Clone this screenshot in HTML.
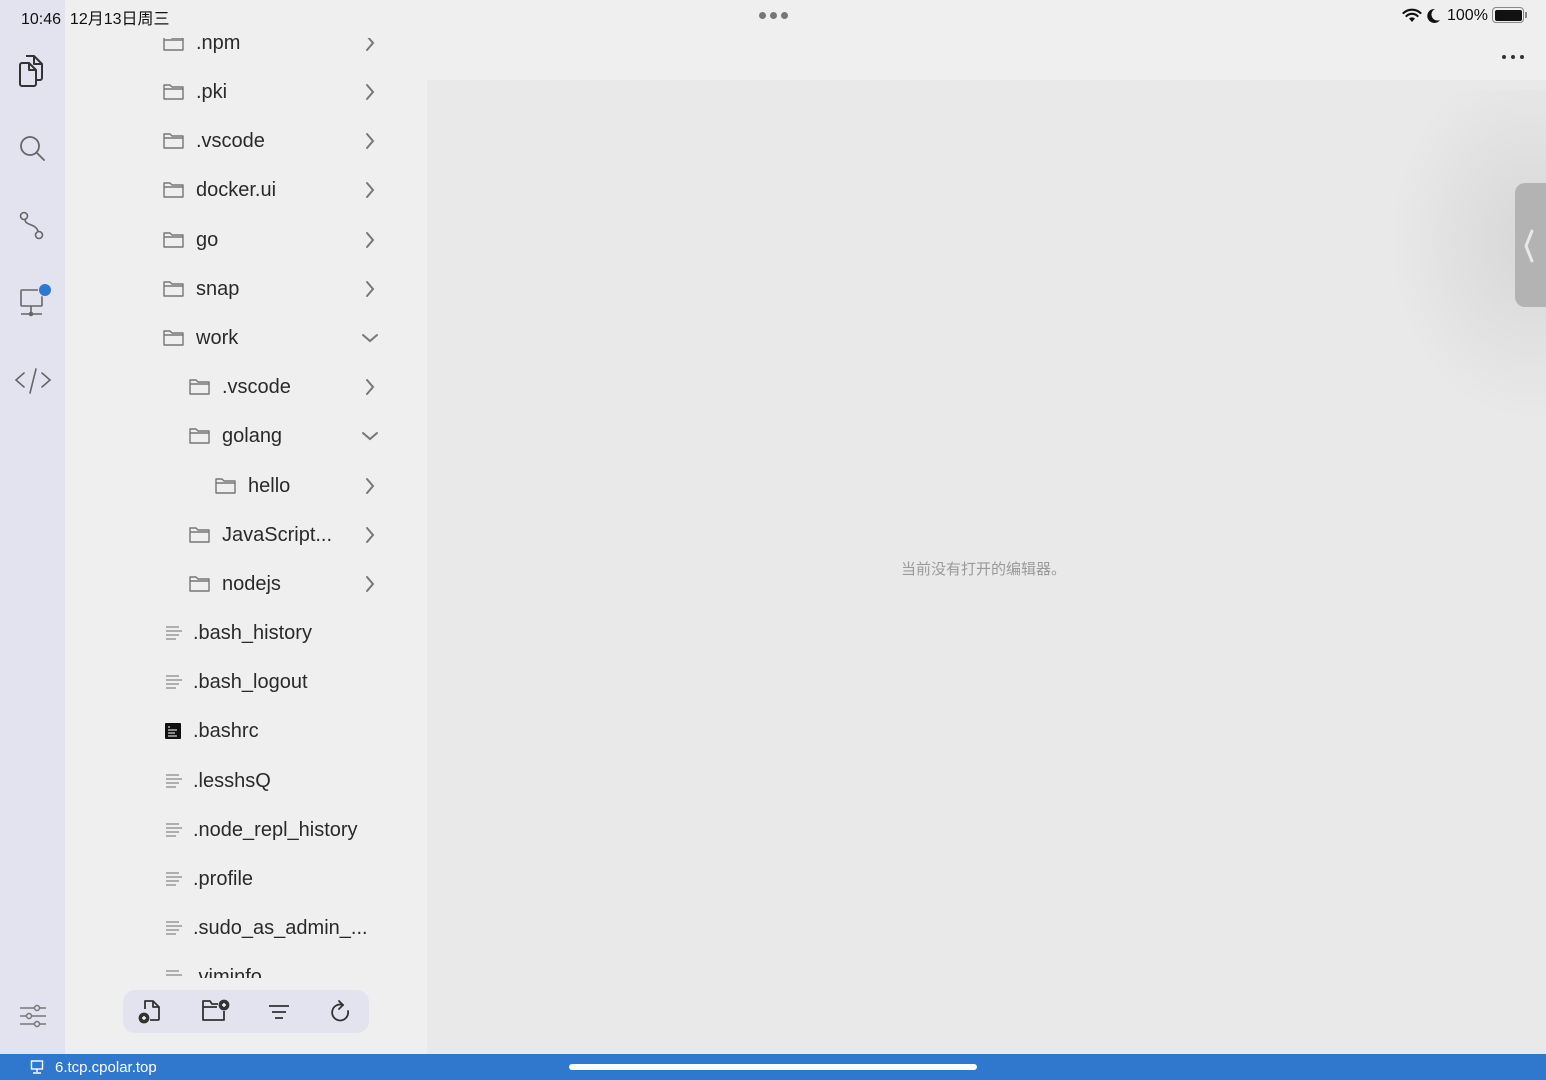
<!DOCTYPE html>
<html><head><meta charset="utf-8"><style>
*{margin:0;padding:0;box-sizing:border-box}
body{width:1546px;height:1080px;overflow:hidden;background:#e9e9e9;font-family:"Liberation Sans","Noto Sans CJK SC",sans-serif;position:relative}
.abs{position:absolute}
#act{left:0;top:0;width:65px;height:1054px;background:#e2e3ef}
#side{left:65px;top:0;width:362px;height:1054px;background:#efefef;overflow:hidden}
#top{left:427px;top:0;width:1119px;height:80px;background:#efefef}
#status{left:0;top:1054px;width:1546px;height:26px;background:#2f78cd;color:#fff;font-size:15px}
.row{position:absolute;height:30px;display:flex;align-items:center;font-size:20px;color:#2a2a2a;white-space:nowrap}
.row svg{flex:none}
.chev{position:absolute}
#list{left:0;top:0;width:362px;height:978px;overflow:hidden}
</style></head><body>
<div id="act" class="abs">
<svg class="abs" style="left:17px;top:53px" width="30" height="36" viewBox="0 0 30 36" fill="none" stroke="#333" stroke-width="2" stroke-linejoin="round"><path d="M9 3h8l8 8v14a2 2 0 0 1-2 2h-4"/><path d="M17 3v8h8"/><path d="M3 12a2 2 0 0 1 2-2h7l7 7v14a2 2 0 0 1-2 2H5a2 2 0 0 1-2-2z"/><path d="M12 10v7h7"/></svg>
<svg class="abs" style="left:18px;top:134px" width="30" height="30" viewBox="0 0 30 30" fill="none" stroke="#666" stroke-width="1.8"><circle cx="12" cy="12" r="9"/><path d="M19 19l7 7" stroke-linecap="round"/></svg>
<svg class="abs" style="left:19px;top:211px" width="28" height="30" viewBox="0 0 28 30" fill="none" stroke="#666" stroke-width="1.6"><circle cx="5" cy="5" r="3.5"/><circle cx="20" cy="24" r="3.5"/><path d="M6 9c1 6 10 3 13 11"/></svg>
<svg class="abs" style="left:18px;top:282px" width="36" height="36" viewBox="0 0 36 36" fill="none" stroke="#666" stroke-width="1.6"><rect x="3" y="8" width="21" height="16" rx="1"/><path d="M13 24v8M3 32h21"/><circle cx="13" cy="32" r="1.5" fill="#666"/><circle cx="27" cy="8" r="6.5" fill="#2f78cd" stroke="#e2e3ef" stroke-width="1"/></svg>
<svg class="abs" style="left:14px;top:366px" width="38" height="30" viewBox="0 0 38 30" fill="none" stroke="#666" stroke-width="1.6" stroke-linecap="round"><path d="M10 7L2 14l8 7M28 7l8 7-8 7M22 3l-6 24"/></svg>
<svg class="abs" style="left:19px;top:1004px" width="28" height="24" viewBox="0 0 28 24" fill="none" stroke="#777" stroke-width="1.5"><path d="M1 4h26M1 12h26M1 20h26"/><circle cx="18" cy="4" r="2.5" fill="#e2e3ef"/><circle cx="10" cy="12" r="2.5" fill="#e2e3ef"/><circle cx="18" cy="20" r="2.5" fill="#e2e3ef"/></svg>
</div>
<div id="side" class="abs">
<div id="list" class="abs"><div id="rows"></div></div>
<div class="abs" style="left:58px;top:990px;width:246px;height:43px;background:#e2e3ef;border-radius:12px"></div>
<svg class="abs" style="left:73px;top:998px" width="24" height="26" viewBox="0 0 24 26" fill="none" stroke="#333" stroke-width="1.8" stroke-linejoin="round"><path d="M7 11V3h8l6 6v12a1 1 0 0 1-1 1h-8"/><path d="M15 3v6h6"/><circle cx="6" cy="20" r="4.5" fill="#333"/><path d="M6 18v4M4 20h4" stroke="#fff" stroke-width="1.4"/></svg>
<svg class="abs" style="left:136px;top:999px" width="30" height="24" viewBox="0 0 30 24" fill="none" stroke="#333" stroke-width="1.8" stroke-linejoin="round"><path d="M17 5h-6l-2-3H2v19h21v-9"/><path d="M2 8h14"/><circle cx="23" cy="6" r="4.5" fill="#333"/><path d="M23 4v4M21 6h4" stroke="#fff" stroke-width="1.4"/></svg>
<svg class="abs" style="left:203px;top:1004px" width="22" height="16" viewBox="0 0 22 16" fill="none" stroke="#333" stroke-width="1.8"><path d="M1 2h20M4 8h14M7 14h8"/></svg>
<svg class="abs" style="left:264px;top:1000px" width="22" height="24" viewBox="0 0 22 24" fill="none" stroke="#333" stroke-width="1.8" stroke-linecap="round"><path d="M14 5a8 8 0 1 0 5 6"/><path d="M10 1l4 4-4 4"/></svg>
</div>
<div class="abs" style="left:65px;top:0;width:362px;height:38px;background:#efefef"></div>
<div id="top" class="abs"></div>
<div class="abs" style="left:1330px;top:90px;width:216px;height:360px;background:radial-gradient(ellipse 140px 180px at 200px 150px,rgba(0,0,0,.08),rgba(0,0,0,0))"></div>
<div class="abs" style="left:1515px;top:183px;width:31px;height:124px;background:#b3b3b3;border-radius:10px 0 0 10px"></div>
<svg class="abs" style="left:1523px;top:229px" width="12" height="34" viewBox="0 0 12 34" fill="none" stroke="#e8e8e8" stroke-width="3" stroke-linecap="round"><path d="M9 2L3 17l6 15"/></svg>
<div class="abs" style="left:1502px;top:55px;width:22px;height:6px;display:flex;justify-content:space-between"><i style="width:4px;height:4px;border-radius:2px;background:#333"></i><i style="width:4px;height:4px;border-radius:2px;background:#333"></i><i style="width:4px;height:4px;border-radius:2px;background:#333"></i></div>
<div class="abs" style="left:901px;top:558px;font-size:15px;color:#9a9a9a">当前没有打开的编辑器。</div>
<div class="abs" style="left:21px;top:5px;font-size:16px;color:#111">10:46 &nbsp;12月13日周三</div>
<div class="abs" style="left:759px;top:12px;display:flex;gap:4px"><i style="width:7px;height:7px;border-radius:4px;background:#777"></i><i style="width:7px;height:7px;border-radius:4px;background:#777"></i><i style="width:7px;height:7px;border-radius:4px;background:#777"></i></div>
<svg class="abs" style="left:1402px;top:8px" width="20" height="15" viewBox="0 0 20 15"><path d="M10 14l3-3.5a4.5 4.5 0 0 0-6 0z" fill="#111"/><path d="M4.5 8a8 8 0 0 1 11 0M1.5 5a12.5 12.5 0 0 1 17 0" fill="none" stroke="#111" stroke-width="2.2" stroke-linecap="round"/></svg>
<svg class="abs" style="left:1427px;top:8px" width="14" height="15" viewBox="0 0 14 15"><path d="M8 1a7 7 0 1 0 5 11A6 6 0 0 1 8 1z" fill="#111"/></svg>
<div class="abs" style="left:1447px;top:7px;font-size:16px;color:#111">100%</div>
<div class="abs" style="left:1492px;top:7px;width:32px;height:16px;border:1.5px solid #888;border-radius:4px;padding:1.5px"><div style="width:100%;height:100%;background:#111;border-radius:2px"></div></div>
<div class="abs" style="left:1525px;top:12px;width:2px;height:6px;background:#888"></div>
<div id="status" class="abs">
<svg class="abs" style="left:30px;top:6px" width="14" height="14" viewBox="0 0 14 14" fill="none" stroke="#fff" stroke-width="1.4"><rect x="1.5" y="1" width="11" height="8"/><path d="M7 9v3M3 13h8"/></svg>
<div class="abs" style="left:55px;top:5px">6.tcp.cpolar.top</div>
<div class="abs" style="left:569px;top:10px;width:408px;height:6px;border-radius:3px;background:#fff"></div>
</div>
<script>
var F='<svg width="21" height="18" viewBox="0 0 21 18" fill="none" stroke="#777" stroke-width="1.4" stroke-linejoin="round"><path d="M1 2h6l2 2h11v12H1z"/><path d="M1 6h19"/></svg>';
function R(l){return '<svg class="chev" style="left:'+l+'px" width="12" height="18" viewBox="0 0 12 18" fill="none" stroke="#777" stroke-width="2" stroke-linecap="round"><path d="M3 2l6 7-6 7"/></svg>';}
function D(l){return '<svg class="chev" style="left:'+l+'px" width="18" height="12" viewBox="0 0 18 12" fill="none" stroke="#777" stroke-width="2" stroke-linecap="round"><path d="M2 3l7 6 7-6"/></svg>';}
var T='<svg width="18" height="16" viewBox="0 0 18 16" stroke="#888" stroke-width="1.3"><path d="M1 2h13M1 6h16M1 10h13M1 14h10"/></svg>';
var B='<svg width="16" height="16" viewBox="0 0 16 16"><rect width="16" height="16" rx="1" fill="#111"/><path d="M3 4h2M3 7h9M3 10h7M3 13h9" stroke="#fff" stroke-width="1"/></svg>';
var items=[[43,'.npm',0,'r'],[92,'.pki',0,'r'],[141,'.vscode',0,'r'],[190,'docker.ui',0,'r'],[240,'go',0,'r'],[289,'snap',0,'r'],[338,'work',0,'d'],[387,'.vscode',1,'r'],[436,'golang',1,'d'],[486,'hello',2,'r'],[535,'JavaScript...',1,'r'],[584,'nodejs',1,'r']];
var h='';
items.forEach(function(it){var x=98+it[2]*26;h+='<div class="row" style="left:'+x+'px;top:'+(it[0]-15)+'px;width:'+(362-x)+'px">'+F+'<span style="margin-left:12px">'+it[1]+'</span>'+(it[3]=='r'?R(299-x):D(296-x))+'</div>';});
var files=[[633,'.bash_history'],[682,'.bash_logout'],[731,'.bashrc',1],[781,'.lesshsQ'],[830,'.node_repl_history'],[879,'.profile'],[928,'.sudo_as_admin_...'],[977,'.viminfo']];
files.forEach(function(f){h+='<div class="row" style="left:100px;top:'+(f[0]-15)+'px">'+(f[2]?B:T)+'<span style="margin-left:'+(f[2]?12:10)+'px">'+f[1]+'</span></div>';});
document.getElementById('rows').innerHTML=h;
</script>
</body></html>
